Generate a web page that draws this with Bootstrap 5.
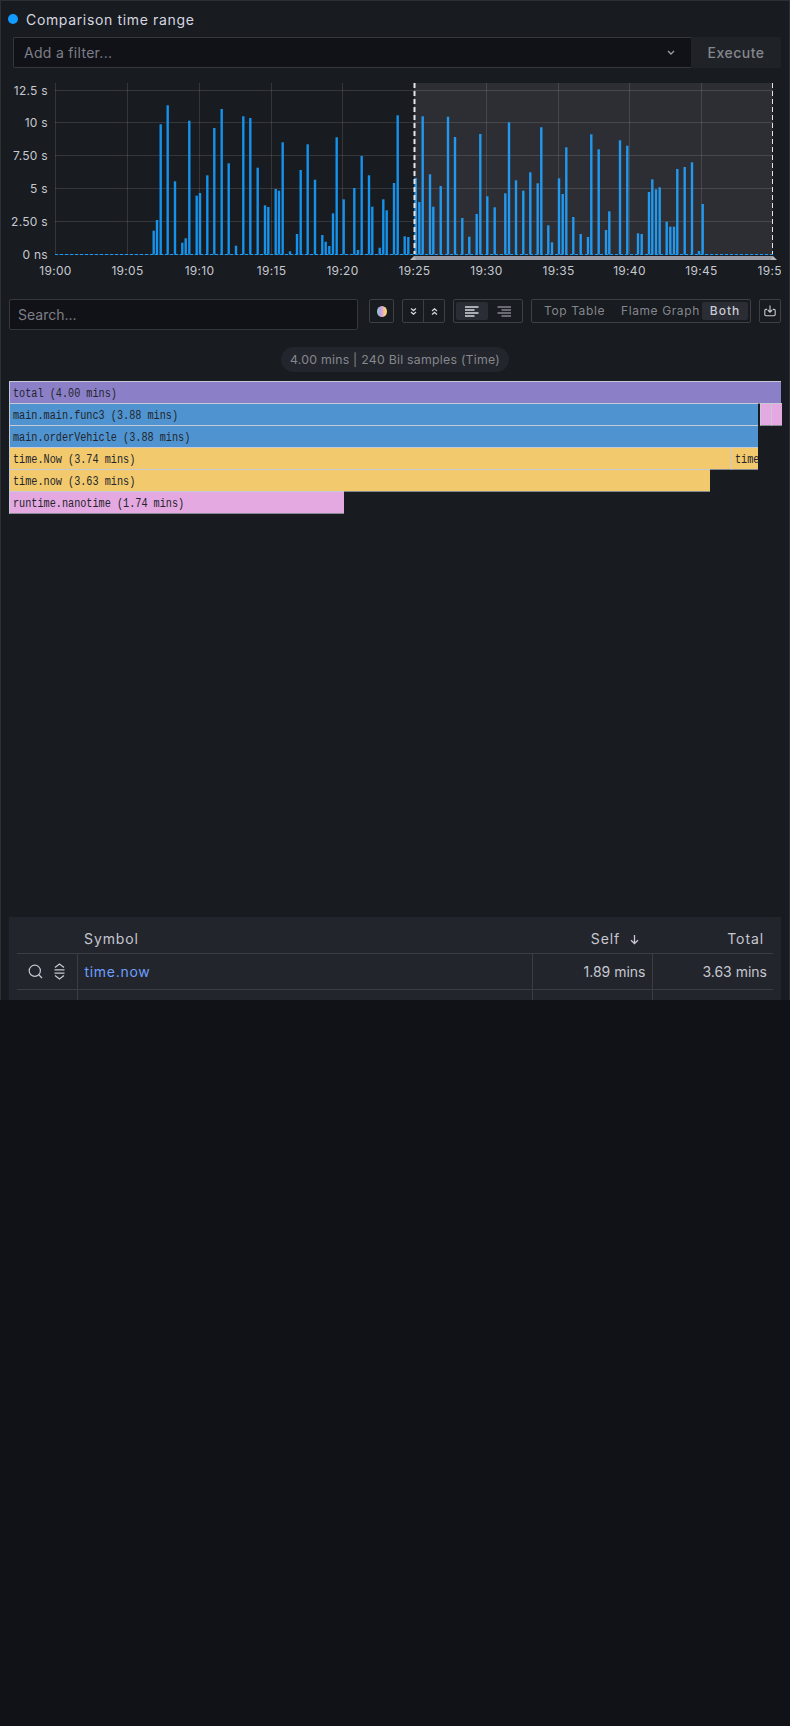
<!DOCTYPE html>
<html lang="en">
<head>
    <meta charset="UTF-8">
    <meta name="viewport" content="width=device-width, initial-scale=1.0">
    <title>Comparison time range</title>
    <link rel="stylesheet" href="https://cdn.jsdelivr.net/npm/bootstrap@5.3.0/dist/css/bootstrap.min.css">
    <style>
        body { background: #111217; color: #ccccdc; font-family: Inter, "Noto Sans", sans-serif; font-size: 14px; }
        .pane { height: 1000px; background: #181b1f; border: 1px solid #2c2f34; border-bottom: 0; overflow: hidden; }
        .pane-head { height: 36px; padding-left: 7px; letter-spacing: .65px; font-weight: 400; color: #d6d7e0; }
        .pane-dot { width: 10px; height: 10px; background: #129cff; border-radius: 50%; }
        .filter-row { height: 31px; margin: 0 8px 0 12px; }
        .filter-input, .search-input { background: #111217; border: 1px solid #34373c; border-radius: 2px; color: #7d7f87; }
        .filter-input { padding: 0 10px; letter-spacing: .3px; border-right: 0; border-radius: 2px 0 0 2px; }
        .filter-input svg { margin-right: 6px; }
        .exec-btn { width: 90px; background: #1f2227; color: #85878e; font-size: 14px; font-weight: 500; letter-spacing: .5px; border-radius: 0 2px 2px 0; }
        .chart-svg { display: block; }
        .chart-svg text { font-family: Inter, sans-serif; font-size: 12px; fill: #c6c8d2; letter-spacing: .3px; }
        .tool-row { margin: 9px 8px 0; align-items: flex-start; }
        .search-input { width: 349px; height: 31px; padding: 0 8px; }
        .tool-box { height: 24px; border: 1px solid #3c3f44; border-radius: 2px; color: #b6b8c2; }
        .tool-cell { height: 100%; }
        .tool-cell + .tool-cell.split { border-left: 1px solid #3c3f44; }
        .tool-on { background: #2a2d33; border-radius: 2px; }
        .tool-toggle { padding: 2px; }
        .view-tab { font-size: 12px; letter-spacing: .6px; color: #85878e; line-height: 18px; height: 18px; white-space: nowrap; }
        .view-tab.tool-on { color: #c9cad4; letter-spacing: 1px; font-weight: 500; width: 46px; text-align: center; }
        .stat-chip { background: #22252b; color: #85878e; font-size: 12.3px; height: 25px; line-height: 25px; padding: 0 8.5px; letter-spacing: .25px; margin-top: 17px; }
        .flame-wrap { height: 536px; margin: 9px 8px 0; }
        .flame-row { height: 22px; }
        .flame-box { height: 22.5px; overflow: hidden; white-space: nowrap; font-family: "Liberation Mono", monospace; font-size: 12.5px; line-height: 24px; padding-left: 3px; color: #23252c; border-top: 1px solid #c5cad6; border-left: 1px solid #c5cad6; border-bottom: 1px solid #85888f; flex: none; }
        .flame-text { display: inline-block; transform: scaleX(.815); transform-origin: left center; }
        .flame-total { background: #8b80c8; }
        .flame-main { background: #4f94d0; }
        .flame-time { background: #f2c96d; }
        .flame-rt { background: #e4a9e0; }
        .table-pane { background: #22252b; padding: 0 8px; height: 200px; }
        .sym-table { --bs-table-bg: transparent; --bs-table-color: #c6c7d1; --bs-table-border-color: #3a3d42; table-layout: fixed; width: 756px; margin: 0; font-size: 14px; }
        .sym-table th { height: 36px; padding: 0 9px 4px 7px; font-weight: 400; letter-spacing: .9px; vertical-align: bottom; }
        .sym-table td { height: 36px; padding: 0 6px 0 7px; vertical-align: middle; border-left: 1px solid #3a3d42; }
        .sym-table td:first-child { border-left: 0; padding: 0; }
        .sym-link { color: #6e9fff; letter-spacing: .7px; text-decoration: none; }
    </style>
</head>
<body>
    <div class="pane">
        <div class="pane-head d-flex align-items-center gap-2">
            <span class="pane-dot"></span>
            <span>Comparison time range</span>
        </div>

        <div class="filter-row d-flex">
            <div class="filter-input flex-grow-1 d-flex align-items-center justify-content-between">
                <span>Add a filter...</span>
                <svg width="8" height="6" viewBox="0 0 8 6" fill="none" stroke="#9a9ca5" stroke-width="1.4"><path d="M1 1l3 3 3-3"/></svg>
            </div>
            <button type="button" class="btn exec-btn p-0 border-0">Execute</button>
        </div>

        <svg id="chart" class="chart-svg" width="780" height="222" viewBox="1 68 780 222"></svg>

        <div class="tool-row d-flex">
            <div class="search-input d-flex align-items-center">Search...</div>
            <div class="tool-box d-flex align-items-center justify-content-center ms-auto" style="width:25px">
                <svg width="10" height="11" viewBox="0 0 10 11">
                    <defs>
                        <linearGradient id="stripes">
                            <stop offset="0" stop-color="#8fd8b8"/>
                            <stop offset=".3" stop-color="#a9a6ea"/>
                            <stop offset=".55" stop-color="#eaa6c8"/>
                            <stop offset=".8" stop-color="#f2d27c"/>
                            <stop offset="1" stop-color="#f2d27c"/>
                        </linearGradient>
                    </defs>
                    <ellipse cx="5" cy="5.500" rx="5" ry="5.500" fill="url(#stripes)"/>
                </svg>
            </div>
            <div class="tool-box d-flex" style="width:43px;margin-left:8px">
                <div class="tool-cell split flex-fill d-flex align-items-center justify-content-center">
                    <svg width="7" height="7" viewBox="0 0 7 7" fill="none" stroke="#d0d1dc" stroke-width="1.300"><path d="M1 .6l2.500 2 2.500-2M1 4l2.500 2.200 2.500-2.200"/></svg>
                </div>
                <div class="tool-cell split flex-fill d-flex align-items-center justify-content-center">
                    <svg width="7" height="7" viewBox="0 0 7 7" fill="none" stroke="#d0d1dc" stroke-width="1.300"><path d="M1 3l2.500-2.200 2.500 2.200M1 6.400l2.500-2 2.500 2"/></svg>
                </div>
            </div>
            <div class="tool-box tool-toggle d-flex" style="width:70px;margin-left:8px">
                <div class="tool-cell tool-on flex-fill d-flex align-items-center justify-content-center">
                    <svg width="14" height="11" viewBox="0 0 14 11" stroke="#d6d7e0" stroke-width="1.500"><path d="M0 1h13.500M0 4h9.500M0 7h13.500M0 10h9.500"/></svg>
                </div>
                <div class="tool-cell flex-fill d-flex align-items-center justify-content-center">
                    <svg width="14" height="11" viewBox="0 0 14 11" stroke="#85878e" stroke-width="1.500"><path d="M.5 1h13.500M4.500 4h9.500M.5 7h13.500M4.500 10h9.500"/></svg>
                </div>
            </div>
            <div class="tool-box tool-toggle d-flex align-items-center" style="width:220px;margin-left:8px;padding-left:12px">
                <span class="view-tab">Top Table</span>
                <span class="view-tab" style="margin-left:16px">Flame Graph</span>
                <span class="view-tab tool-on ms-auto">Both</span>
            </div>
            <div class="tool-box d-flex align-items-center justify-content-center" style="width:22px;margin-left:8px">
                <svg width="12" height="12" viewBox="0 0 12 12" fill="none" stroke="#c9cad4" stroke-width="1.100"><path d="M3.200 4.400H2a1.200 1.200 0 0 0-1.200 1.200v4a1.200 1.200 0 0 0 1.200 1.200h8a1.200 1.200 0 0 0 1.200-1.200v-4A1.200 1.200 0 0 0 10 4.400H8.800M6 .4v6.800M3.800 5l2.200 2.200L8.200 5"/></svg>
            </div>
        </div>

        <div class="d-flex justify-content-center">
            <span class="stat-chip rounded-pill">4.00 mins | 240 Bil samples (Time)</span>
        </div>

        <div id="flame" class="flame-wrap"></div>

        <div class="table-pane" style="margin:0 8px">
            <table class="table sym-table">
                <colgroup><col style="width:60px"><col style="width:455px"><col style="width:120px"><col style="width:121px"></colgroup>
                <thead>
                    <tr>
                        <th></th>
                        <th>Symbol</th>
                        <th class="text-end" style="padding-right:12px">Self
                            <svg class="ms-1" width="11" height="11" viewBox="0 0 11 11" fill="none" stroke="#c6c7d1" stroke-width="1.300"><path d="M5.500 1v8.500M2 6.200l3.500 3.300L9 6.200"/></svg>
                        </th>
                        <th class="text-end">Total</th>
                    </tr>
                </thead>
                <tbody>
                    <tr>
                        <td>
                            <div class="d-flex align-items-center justify-content-center" style="gap:11px">
                                <svg width="15" height="15" viewBox="0 0 15 15" fill="none" stroke="#c6c7d1" stroke-width="1.200"><circle cx="6.800" cy="6.800" r="5.600"/><path d="M11 11l3 3"/></svg>
                                <svg width="11" height="17" viewBox="0 0 11 17" fill="none" stroke="#c6c7d1" stroke-width="1.300"><path d="M1 4.500l4.500-3.500L10 4.500M.5 6.800h10M.5 10.200h10M1 12.500l4.500 3.500L10 12.500"/></svg>
                            </div>
                        </td>
                        <td><a href="#" class="sym-link">time.now</a></td>
                        <td class="text-end">1.89 mins</td>
                        <td class="text-end">3.63 mins</td>
                    </tr>
                    <tr><td></td><td></td><td></td><td></td></tr>
                </tbody>
            </table>
        </div>
    </div>

    <script src="https://cdn.jsdelivr.net/npm/bootstrap@5.3.0/dist/js/bootstrap.bundle.min.js"></script>
    <script>
        // [x, top y] read off the reference, baseline is 254.5
        const bars = [[153.7,230.7],[157,220],[160.7,124.3],[167.7,105.3],[175,181.3],[182.3,242.7],[185.7,238.3],[189.3,120.7],[196.7,195.7],[200,193],[207.3,175.3],[214.3,128],[221.7,109],[228.7,163.3],[236,245.7],[243.3,116.3],[250.3,118],[257.7,167.7],[265,205.3],[268.3,207],[275.7,189],[279,190.7],[282.7,142.3],[290,251.3],[297,234],[300.7,170],[307.7,144.3],[315,179.7],[322.3,235],[325.7,241.7],[329.3,246],[333,213.3],[336.7,137.3],[343.7,199.3],[354.3,188],[358,250],[361.7,156],[369,175.3],[372.3,206.7],[379.7,247.7],[383.3,199.3],[386.7,210.3],[394,183],[397.7,115.3],[404.7,236.3],[408.3,237],[415.7,178],[419.3,202],[422.7,116.3],[430,174.3],[433.3,206.7],[440.7,186],[448,116.7],[455,137],[462.3,218],[469.3,236.7],[476.7,214],[480.3,134],[487.3,196.3],[494.7,207.3],[505.3,193.3],[509,122.3],[516,180.3],[523.3,190.7],[530.3,172.3],[537.7,183.3],[541.3,127.3],[548.3,225.3],[552,242.3],[559,178.3],[562.7,194],[566.3,147.3],[573.3,217],[580.7,234],[588,237],[591.3,134.3],[598.7,149.3],[606,230],[609.3,211.3],[620,140.3],[627.3,145.7],[638,233.3],[641.7,234],[649,192],[652.3,179.3],[656,189.3],[659.7,187.3],[666.7,221.7],[670.3,226.7],[674,226.7],[677.3,169],[684.7,167],[692,162.3],[699,251],[702.7,204]];
        const gridX = [55.5,127.5,199.5,271.5,342.5,414.5,486.5,558.5,629.5,701.5];
        const timeLabels = ['19:00','19:05','19:10','19:15','19:20','19:25','19:30','19:35','19:40','19:45'];
        const gridY = [[90.5,'12.5 s'],[122.5,'10 s'],[155.5,'7.50 s'],[188.5,'5 s'],[221.5,'2.50 s'],[254.5,'0 ns']];

        let chart = '';
        chart += '<rect x="415" y="83" width="358" height="171" fill="#2d2e33"/>';
        gridY.forEach(g => {
            chart += `<path d="M55 ${g[0]}H773" stroke="#fff" stroke-opacity=".12"/>`;
            chart += `<text x="48" y="${g[0] + 4.5}" text-anchor="end">${g[1]}</text>`;
        });
        gridX.forEach(x => {
            chart += `<path d="M${x} 83V254" stroke="#fff" stroke-opacity=".12"/>`;
        });
        timeLabels.forEach((t, i) => {
            chart += `<text x="${gridX[i]}" y="274.500" text-anchor="middle">${t}</text>`;
        });
        chart += '<text x="757.500" y="274.500">19:5</text>';
        bars.forEach(b => {
            chart += `<rect x="${b[0] - 1.2}" y="${b[1]}" width="2.400" height="${254.5 - b[1]}" fill="${b[0] > 414 ? '#2298ee' : '#1592ea'}"/>`;
        });
        chart += '<path d="M55 254.500H773" stroke="#129cff" stroke-dasharray="3 2"/>';
        chart += '<rect x="414" y="256" width="359" height="4" fill="#9a9aa3"/>';
        chart += '<path d="M410 260l4-4 2 4zM771 260l2-4 4 4z" fill="#b5b5bc"/>';
        chart += '<path d="M414.500 83V254" stroke="#e6e6ea" stroke-width="2" stroke-dasharray="5 3"/>';
        chart += '<path d="M772.500 83V254" stroke="#e6e6ea" stroke-dasharray="5 3"/>';
        document.getElementById('chart').innerHTML = chart;

        // one row per stack depth: [width, gap before, colour class, label]
        const flameRows = [
            [[772, 0, 'flame-total', 'total (4.00 mins)']],
            [[749, 0, 'flame-main', 'main.main.func3 (3.88 mins)'], [11, 2, 'flame-rt', ''], [11, 0, 'flame-rt', '']],
            [[749, 0, 'flame-main', 'main.orderVehicle (3.88 mins)']],
            [[722, 0, 'flame-time', 'time.Now (3.74 mins)'], [27, 0, 'flame-time', 'time']],
            [[701, 0, 'flame-time', 'time.now (3.63 mins)']],
            [[335, 0, 'flame-rt', 'runtime.nanotime (1.74 mins)']]
        ];
        const flame = document.getElementById('flame');
        flameRows.forEach(cells => {
            const row = document.createElement('div');
            row.className = 'flame-row d-flex';
            cells.forEach(c => {
                const box = document.createElement('div');
                box.className = 'flame-box ' + c[2];
                box.style.width = c[0] + 'px';
                box.style.marginLeft = c[1] + 'px';
                if (c[3]) {
                    const label = document.createElement('span');
                    label.className = 'flame-text';
                    label.textContent = c[3];
                    box.appendChild(label);
                }
                row.appendChild(box);
            });
            flame.appendChild(row);
        });
    </script>
</body>
</html>
